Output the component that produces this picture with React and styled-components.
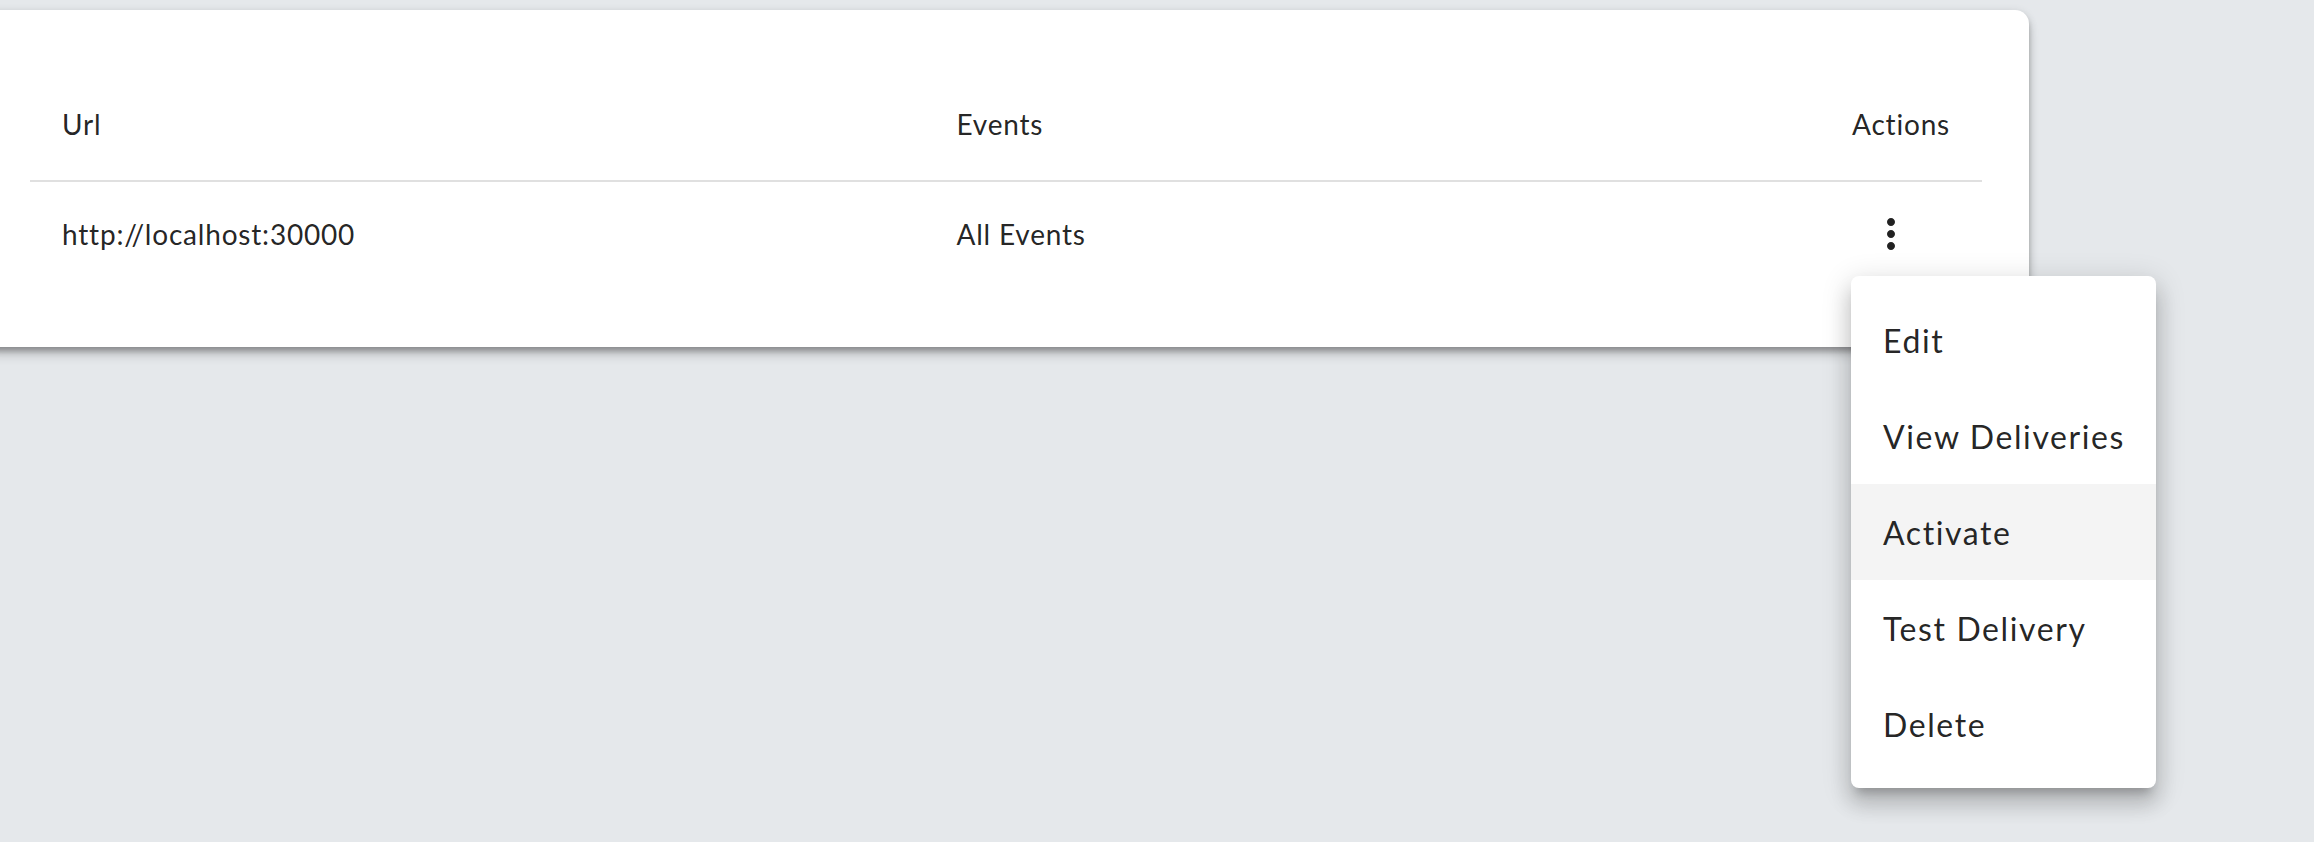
import React from "react";
import styled, { createGlobalStyle } from "styled-components";

const GlobalStyle = createGlobalStyle`
    html, body {
        margin: 0;
        padding: 0;
        background-color: #e5e8eb;
        font-family: Lato, "Noto Sans", sans-serif;
        color: rgba(0, 0, 0, 0.87);
        overflow: hidden;
    }
`

const Page = styled.main`
    padding-top: 10px;
    min-height: 832px;
`

const Card = styled.section`
    margin-left: -20px;
    width: 2049px;
    box-sizing: border-box;
    padding: 58px 47px 61px 50px;
    background-color: #fff;
    border-radius: 14px;
    box-shadow: 0 8px 12px -2px rgba(0, 0, 0, 0.25), 0 4px 4px 0 rgba(0, 0, 0, 0.14), 0 2px 10px 0 rgba(0, 0, 0, 0.12);
`

const Row = styled.div`
    display: grid;
    grid-template-columns: 1fr 1fr 163px;
    height: ${props => props.$head ? "112px" : "104px"};
    border-bottom: ${props => props.$head ? "2px solid #e0e0e0" : "none"};
`

const Cell = styled.div`
    display: flex;
    align-items: center;
    justify-content: ${props => props.$right ? "flex-end" : "flex-start"};
    padding: 0 32px;
    font-size: 28px;
    letter-spacing: 0.8px;
    white-space: nowrap;
`

const IconButton = styled.button`
    display: flex;
    align-items: center;
    justify-content: center;
    width: 80px;
    height: 80px;
    padding: 0;
    border: none;
    border-radius: 50%;
    background: transparent;
    color: rgba(0, 0, 0, 0.87);
    cursor: pointer;
`

const MenuAnchor = styled.div`
    position: relative;
`

const Menu = styled.ul`
    position: absolute;
    top: 82px;
    left: 0;
    width: 305px;
    margin: 0;
    padding: 16px 0;
    list-style: none;
    background-color: #fff;
    border-radius: 8px;
    box-shadow: 0 10px 10px -6px rgba(0, 0, 0, 0.2), 0 16px 20px 2px rgba(0, 0, 0, 0.14), 0 6px 28px 4px rgba(0, 0, 0, 0.12);
    z-index: 10;
`

const MenuItem = styled.li`
    display: flex;
    align-items: center;
    height: 96px;
    padding: 0 32px;
    font-size: 32px;
    letter-spacing: 1.6px;
    white-space: nowrap;
    background-color: ${props => props.$active ? "#f4f4f4" : "transparent"};
`

function MoreVert() {
    return (
        <svg width="48" height="48" viewBox="0 0 24 24" fill="currentColor">
            <path d="M12 8c1.1 0 2-.9 2-2s-.9-2-2-2-2 .9-2 2 .9 2 2 2zm0 2c-1.1 0-2 .9-2 2s.9 2 2 2 2-.9 2-2-.9-2-2-2zm0 6c-1.1 0-2 .9-2 2s.9 2 2 2 2-.9 2-2-.9-2-2-2z" />
        </svg>
    )
}

const actions = ["Edit", "View Deliveries", "Activate", "Test Delivery", "Delete"]

export default function App() {
    return (
        <Page>
            <GlobalStyle />
            <Card>
                <Row $head>
                    <Cell>Url</Cell>
                    <Cell>Events</Cell>
                    <Cell $right>Actions</Cell>
                </Row>
                <Row>
                    <Cell>http://localhost:30000</Cell>
                    <Cell>All Events</Cell>
                    <Cell>
                        <MenuAnchor>
                            <IconButton aria-label="actions">
                                <MoreVert />
                            </IconButton>
                            <Menu>
                                {actions.map(a => (
                                    <MenuItem key={a} $active={a === "Activate"}>{a}</MenuItem>
                                ))}
                            </Menu>
                        </MenuAnchor>
                    </Cell>
                </Row>
            </Card>
        </Page>
    )
}
